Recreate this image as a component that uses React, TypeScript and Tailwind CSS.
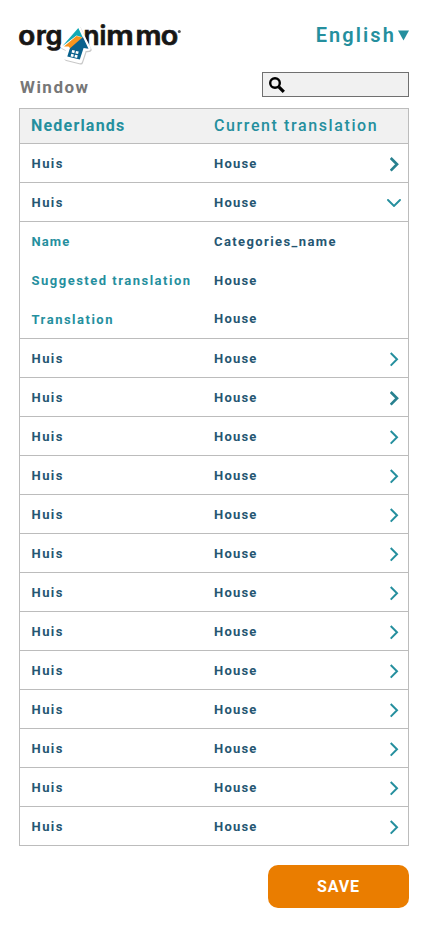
import React from 'react';

const font = "font-['Roboto','Liberation_Sans',sans-serif]";

function Logo() {
  return (
    <svg width="166" height="44" viewBox="19 24 166 44" aria-label="organimmo" className="block overflow-visible">
      <g fill="#171615" stroke="#171615" strokeWidth="0.7" fontFamily="Inter, sans-serif" fontWeight="600" fontSize="26">
        <text x="18.300" y="45" textLength="17" lengthAdjust="spacingAndGlyphs">o</text>
        <text x="36" y="45">r</text>
        <text x="45.500" y="45" textLength="17" lengthAdjust="spacingAndGlyphs">g</text>
        <text x="83.500" y="45" textLength="16" lengthAdjust="spacingAndGlyphs">n</text>
        <text x="99.400" y="45">i</text>
        <text x="106.300" y="45" textLength="27.500" lengthAdjust="spacingAndGlyphs">m</text>
        <text x="135.500" y="45" textLength="26" lengthAdjust="spacingAndGlyphs">m</text>
        <text x="160.700" y="45" textLength="17.500" lengthAdjust="spacingAndGlyphs">o</text>
      </g>
      <circle cx="179.300" cy="31.500" r="1.500" fill="#555" />
      <path d="M78 27.500 88.500 48.500 84 49 80 61 66 57.500 68.500 49 62.500 46z" fill="#777" stroke="#777" strokeWidth="4.500" strokeLinejoin="round" opacity=".4" transform="translate(.8 1.200)" />
      <path d="M78 27.500 88.500 48.500 84 49 80 61 66 57.500 68.500 49 62.500 46z" fill="#fff" stroke="#fff" strokeWidth="4.500" strokeLinejoin="round" />
      <path d="M78.300 28 82.800 37.500 76.500 35.500 62.500 46z" fill="#12a9b5" />
      <path d="M76.500 36 82.500 37.500 71 49 68.500 46.500 64 46.500z" fill="#f7941d" />
      <path d="M82.900 37 88.500 48.700 83.600 48 79.800 59.500 67.300 56.500 69.800 48.500z" fill="#08618d" />
      <path d="m72.200 50 2.700.6-.6 2.600-2.700-.6zm3.800.9 2.700.6-.6 2.600-2.700-.6zm-4.800 2.900 2.700.6-.6 2.600-2.700-.6zm3.800.9 2.700.6-.6 2.600-2.700-.6z" fill="#fff" />
    </svg>
  );
}

function Chevron({ bold = false, down = false }: { bold?: boolean; down?: boolean }) {
  return down ? (
    <svg width="14" height="8" viewBox="0 0 14 8" fill="none" stroke="#258f9e" strokeWidth="1.9" strokeLinecap="round" className="mr-[7px] mt-0.5">
      <path d="m1 1 6 6 6-6" />
    </svg>
  ) : (
    <svg width="9" height="15" viewBox="0 0 9 15" fill="none" stroke={bold ? '#28818f' : '#258f9e'} strokeWidth={bold ? 2.7 : 2} className="mr-[9px] mt-0.5">
      <path d="m.7 1 6.300 6.300-6.300 6.300" />
    </svg>
  );
}

function Row({ bold = false, down = false }: { bold?: boolean; down?: boolean }) {
  return (
    <div className="flex h-[39px] items-center border-b border-[#bcbcbc] text-[13px] font-bold text-[#255672]">
      <span className="w-[194px] pl-[11.500px] pt-0.5 tracking-[1.450px]">Huis</span>
      <span className="flex-1 pt-0.5 tracking-[1.200px]">House</span>
      <Chevron bold={bold} down={down} />
    </div>
  );
}

const details = [
  ['Name', 'Categories_name'],
  ['Suggested translation', 'House'],
  ['Translation', 'House'],
];

export default function App() {
  return (
    <main className={`h-[926px] w-[428px] bg-white px-[19px] pt-6 ${font}`}>
      <header className="flex h-12 justify-between">
        <Logo />
        <button className="flex h-[22px] items-center text-[20px] font-semibold tracking-[2.100px] text-[#258f9e]">
          English
          <svg width="11" height="11" viewBox="0 0 11 11" className="ml-0.5"><path d="M0 .5h11L5.500 10.500z" fill="#258f9e" /></svg>
        </button>
      </header>
      <div className="flex h-9 justify-between">
        <h1 className="ml-px mt-[3px] text-[17px] font-bold leading-6 tracking-[1.500px] text-[#777]">Window</h1>
        <div className="flex h-[25px] w-[147px] items-center border border-[#707070] bg-[#f1f1f1] pl-[6px]">
          <svg width="16" height="16" viewBox="0 0 16 16" fill="none" stroke="#000">
            <circle cx="6" cy="6" r="4.800" strokeWidth="2.400" />
            <path d="m9.800 9.800 5 5" strokeWidth="3.200" />
          </svg>
        </div>
      </div>
      <section className="border-x border-t border-[#bcbcbc]">
        <div className="flex h-[35px] items-center border-b border-[#bcbcbc] bg-[#f1f1f1] text-[16px] text-[#258f9e]">
          <span className="w-[194px] pl-[11px] font-bold tracking-[1.200px]">Nederlands</span>
          <span className="font-medium tracking-[1.600px]">Current translation</span>
        </div>
        <Row bold />
        <Row down />
        <div className="h-[117px] border-b border-[#bcbcbc] text-[13px] font-bold">
          {details.map(([label, value]) => (
            <div key={label} className="flex h-[39px] items-center">
              <span className={`w-[194px] pl-[11.500px] text-[#258f9e] ${label === 'Name' ? 'tracking-[1.100px]' : 'tracking-[1.500px]'}`}>{label}</span>
              <span className={`text-[#255672] ${value === 'House' ? 'tracking-[1.200px]' : 'tracking-[1.400px]'} ${label === 'Translation' ? '-mt-0.5' : ''}`}>{value}</span>
            </div>
          ))}
        </div>
        {Array.from({ length: 13 }, (_, i) => <Row key={i} bold={i === 1} />)}
      </section>
      <button className="ml-auto mt-[19px] flex h-[43px] w-[141px] items-center justify-center rounded-[10px] bg-[#ea7d00] text-[16px] font-bold tracking-[0.900px] text-white">SAVE</button>
    </main>
  );
}
